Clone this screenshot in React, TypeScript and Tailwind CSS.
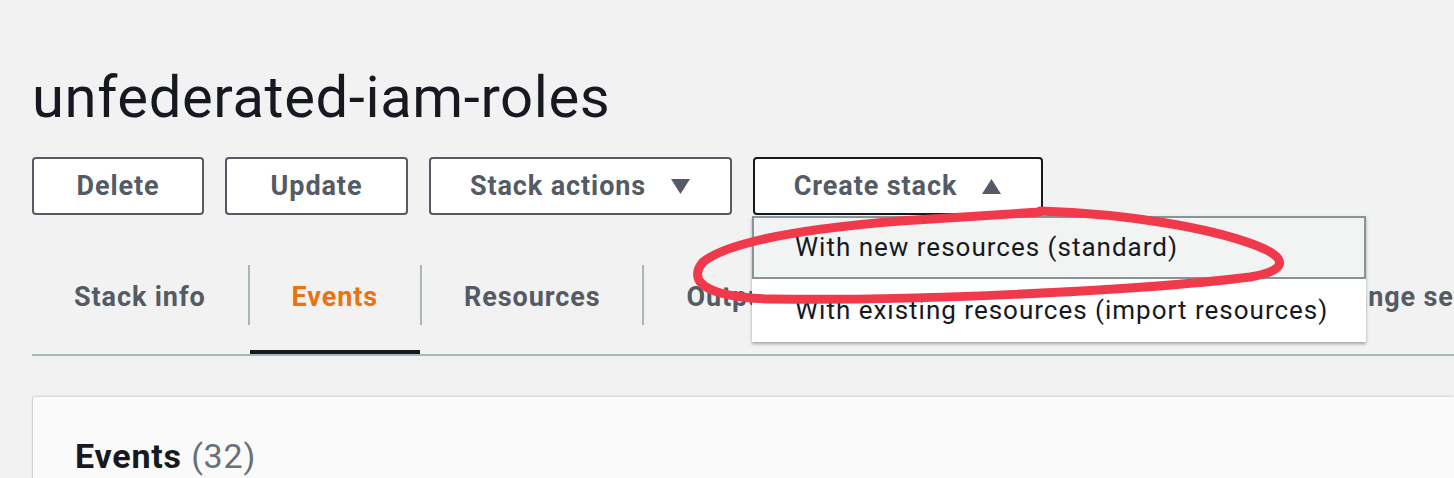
import React from 'react'

const tabs = ['Stack info', 'Events', 'Resources', 'Outputs', 'Parameters', 'Template', 'Change sets']

function Caret({ up }: { up?: boolean }) {
  return (
    <svg width="21" height="17" viewBox="0 0 21 17" className="ml-[24px]">
      {up ? <path d="M10.5 1 L20 16 L1 16 Z" fill="#545b64" /> : <path d="M1 1 L20 1 L10.5 16 Z" fill="#545b64" />}
    </svg>
  )
}

function Btn({ label, w, caret, open }: { label: string; w: string; caret?: 'up' | 'down'; open?: boolean }) {
  return (
    <button
      className={`${w} h-[58px] flex items-center justify-center rounded-[4px] border-2 bg-white text-[27px] tracking-[0.9px] font-bold text-[#545b64] ${
        open ? 'border-[#16191f]' : 'border-[#545b64]'
      }`}
    >
      {label}
      {caret && <Caret up={caret === 'up'} />}
    </button>
  )
}

export default function App() {
  return (
    <div className="relative min-h-screen overflow-hidden bg-[#f2f2f2] font-['Roboto',sans-serif] text-[#16191f]">
      <div className="pl-[32px] pt-[61px]">
        <h1 className="text-[58px] leading-[72px] tracking-[0.6px] font-normal text-[#16191f]">unfederated-iam-roles</h1>

        {/* action buttons */}
        <div className="mt-[24px] flex gap-[21px]">
          <Btn label="Delete" w="w-[172px]" />
          <Btn label="Update" w="w-[183px]" />
          <Btn label="Stack actions" w="w-[303px]" caret="down" />
          <div className="relative">
            <Btn label="Create stack" w="w-[290px]" caret="up" open />
            <div className="absolute left-[-1px] top-[59px] z-10 w-[614px] bg-white shadow-[0_2px_3px_rgba(0,28,36,0.35)]">
              <div className="h-[63px] flex items-center pl-[41px] border-2 border-[#879596] bg-[#f2f3f3] text-[26px] tracking-[1px] text-[#16191f]">
                With new resources (standard)
              </div>
              <div className="h-[63px] flex items-center pl-[43px] text-[26px] tracking-[1px] text-[#16191f]">
                With existing resources (import resources)
              </div>
            </div>
          </div>
        </div>

        {/* tabs */}
        <div className="mt-[50px] flex whitespace-nowrap border-b-2 border-[#aab7b8]">
          {tabs.map((t, i) => (
            <div key={t} className="flex flex-col">
              <div
                className={`h-[60px] flex items-center px-[42px] pt-[4px] text-[27px] tracking-[0.9px] font-bold ${
                  i > 0 ? 'border-l-2 border-[#aab7b8]' : ''
                } ${t === 'Events' ? 'text-[#ec7211]' : 'text-[#545b64]'}`}
              >
                {t}
              </div>
              <div className="h-[25px]" />
              <div className={`h-[4px] ${t === 'Events' ? 'ml-[2px] bg-[#16191f]' : ''}`} />
            </div>
          ))}
        </div>

        {/* events card */}
        <div className="mt-[41px] ml-[1px] h-[200px] bg-[#fafafa] pl-[42px] pt-[39px] shadow-[0_-1px_2px_rgba(0,28,36,0.12),-1px_0_1px_rgba(0,28,36,0.1)]">
          <h2 className="text-[34px] font-bold leading-[40px] tracking-[0.8px]">
            Events <span className="font-normal text-[#687078]">(32)</span>
          </h2>
        </div>
      </div>

      {/* red hand-drawn annotation */}
      <svg className="pointer-events-none absolute left-0 top-0 z-20" width="1454" height="478" viewBox="0 0 1454 478">
        <path
          d="M1040 211 C1130 214 1210 228 1255 245 C1290 258 1287 271 1250 277 C1130 292 900 301 770 299 C702 297 688 280 703 262 C728 242 800 229 900 221 L1040 212"
          fill="none"
          stroke="#f03a4c"
          strokeWidth="9"
          strokeLinecap="round"
          strokeLinejoin="round"
        />
      </svg>
    </div>
  )
}
